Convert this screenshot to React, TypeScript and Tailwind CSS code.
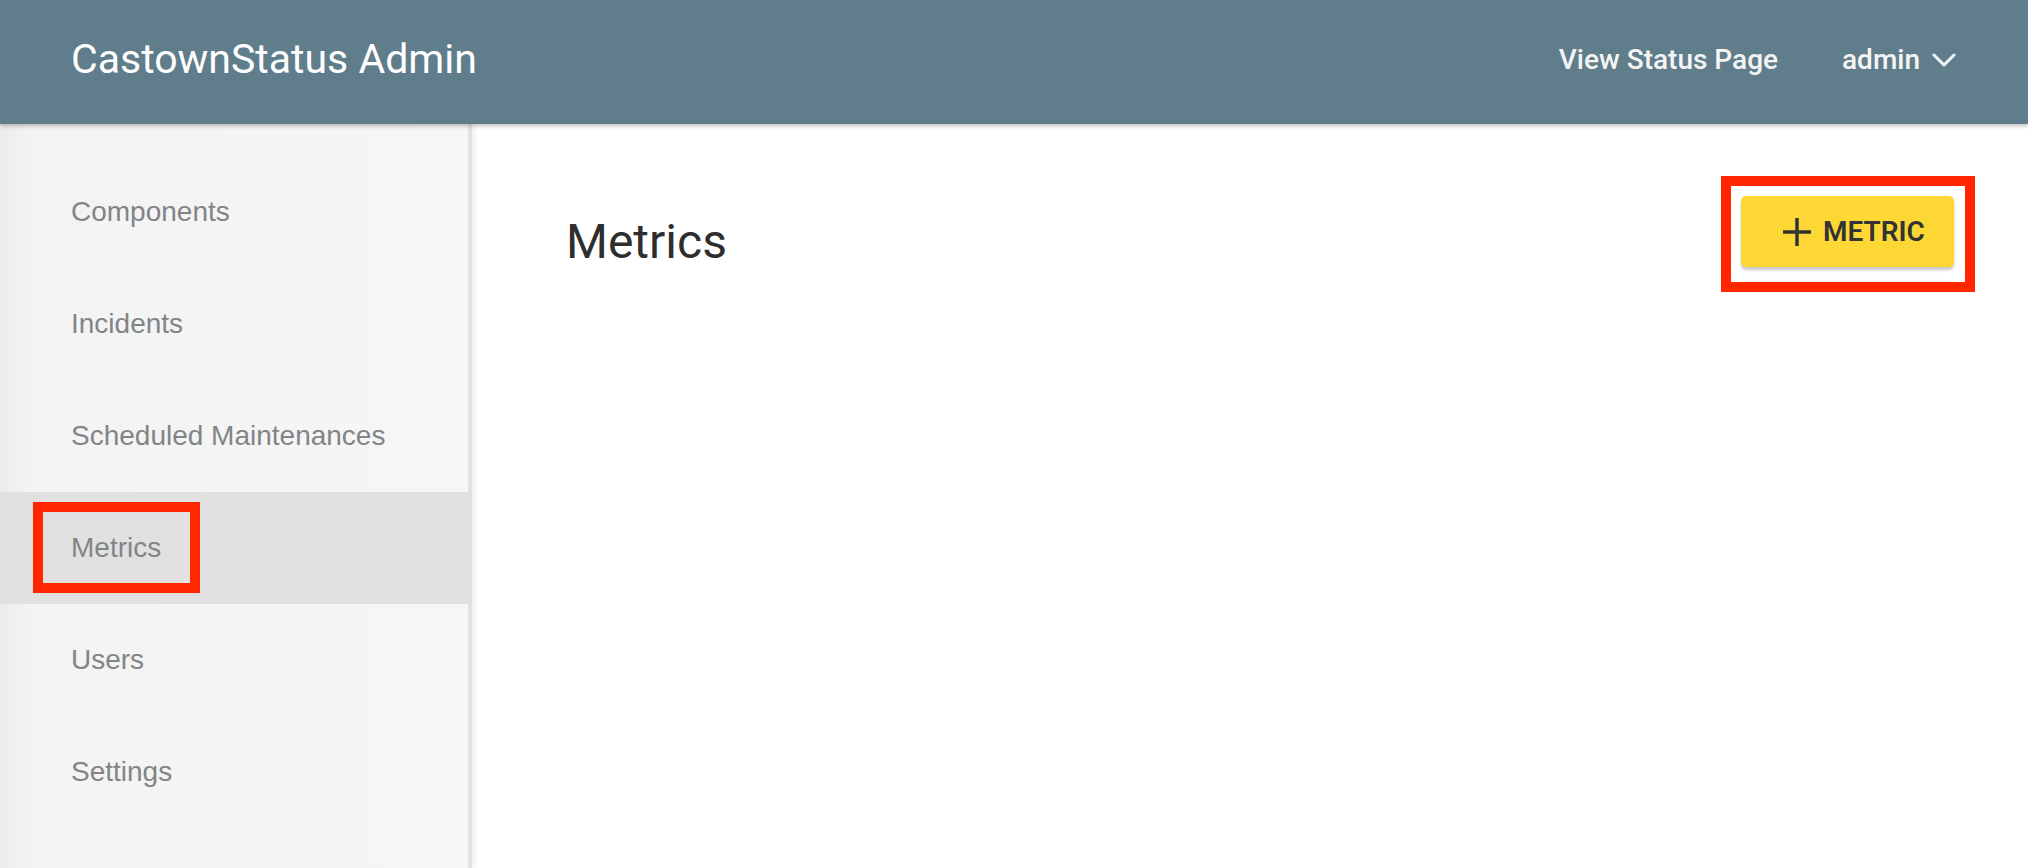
import React from 'react';

const navItems = ['Components', 'Incidents', 'Scheduled Maintenances', 'Metrics', 'Users', 'Settings'];

function Chevron() {
  return (
    <svg width="24" height="14" viewBox="0 0 24 14" fill="none" stroke="currentColor" strokeWidth={3} strokeLinecap="round" strokeLinejoin="round">
      <path d="M2 2l10 10L22 2" />
    </svg>
  );
}

function Plus() {
  return (
    <svg width="30" height="30" viewBox="0 0 30 30" fill="none" stroke="currentColor" strokeWidth={3.5}>
      <path d="M15 1v28M1 15h28" />
    </svg>
  );
}

export default function App() {
  const active = 'Metrics';

  return (
    <div className="h-[868px] w-full flex flex-col overflow-hidden bg-white font-['Roboto',sans-serif]">
      {/* header */}
      <header className="relative z-20 h-[124px] shrink-0 bg-[#607d8b] flex items-center justify-between pl-[71px] pr-[72px] shadow-[0_2px_4px_rgba(0,0,0,0.25)]">
        <div className="text-white text-[41px] leading-none pb-[6px]">CastownStatus Admin</div>
        <div className="flex items-center gap-[64px] text-[#f4f4f4] text-[28px] font-medium pb-[4px]">
          <span>View Status Page</span>
          <span className="flex items-center gap-[12px]">
            admin
            <Chevron />
          </span>
        </div>
      </header>

      <div className="flex flex-1 min-h-0">
        {/* sidebar */}
        <aside className="relative z-10 w-[472px] shrink-0 border-r-4 border-[#e2e2e2] bg-[linear-gradient(to_right,#ececec_0px,#f3f3f3_28px,#f6f6f6_100%)] shadow-[3px_0_5px_rgba(0,0,0,0.06)] pt-[32px] font-['Liberation_Sans',Arial,sans-serif]">
          {navItems.map(item => (
            <div
              key={item}
              className={`relative h-[112px] flex items-center pl-[71px] text-[28px] text-[#818588] ${item === active ? 'bg-[#e1e1e1]' : ''}`}
            >
              {item}
              {item === active && (
                <div className="absolute left-[33px] top-[10px] w-[167px] h-[91px] border-[10px] border-[#ff2600]" />
              )}
            </div>
          ))}
        </aside>

        {/* main */}
        <main className="flex-1 flex items-start justify-between pl-[94px] pr-[74px] pt-[72px]">
          <h1 className="mt-[18px] text-[48px] leading-[56px] text-[#2e2e2e] font-normal">Metrics</h1>
          <div className="relative">
            <button className="h-[71px] w-[213px] rounded-[5px] bg-[#fdd835] text-[#333333] flex items-center pl-[41px] gap-[11px] text-[28px] font-semibold shadow-[0_3px_3px_rgba(0,0,0,0.22)]">
              <Plus />
              METRIC
            </button>
            <div className="absolute -left-[20px] -top-[20px] w-[254px] h-[116px] border-[10px] border-[#ff2600]" />
          </div>
        </main>
      </div>
    </div>
  );
}
